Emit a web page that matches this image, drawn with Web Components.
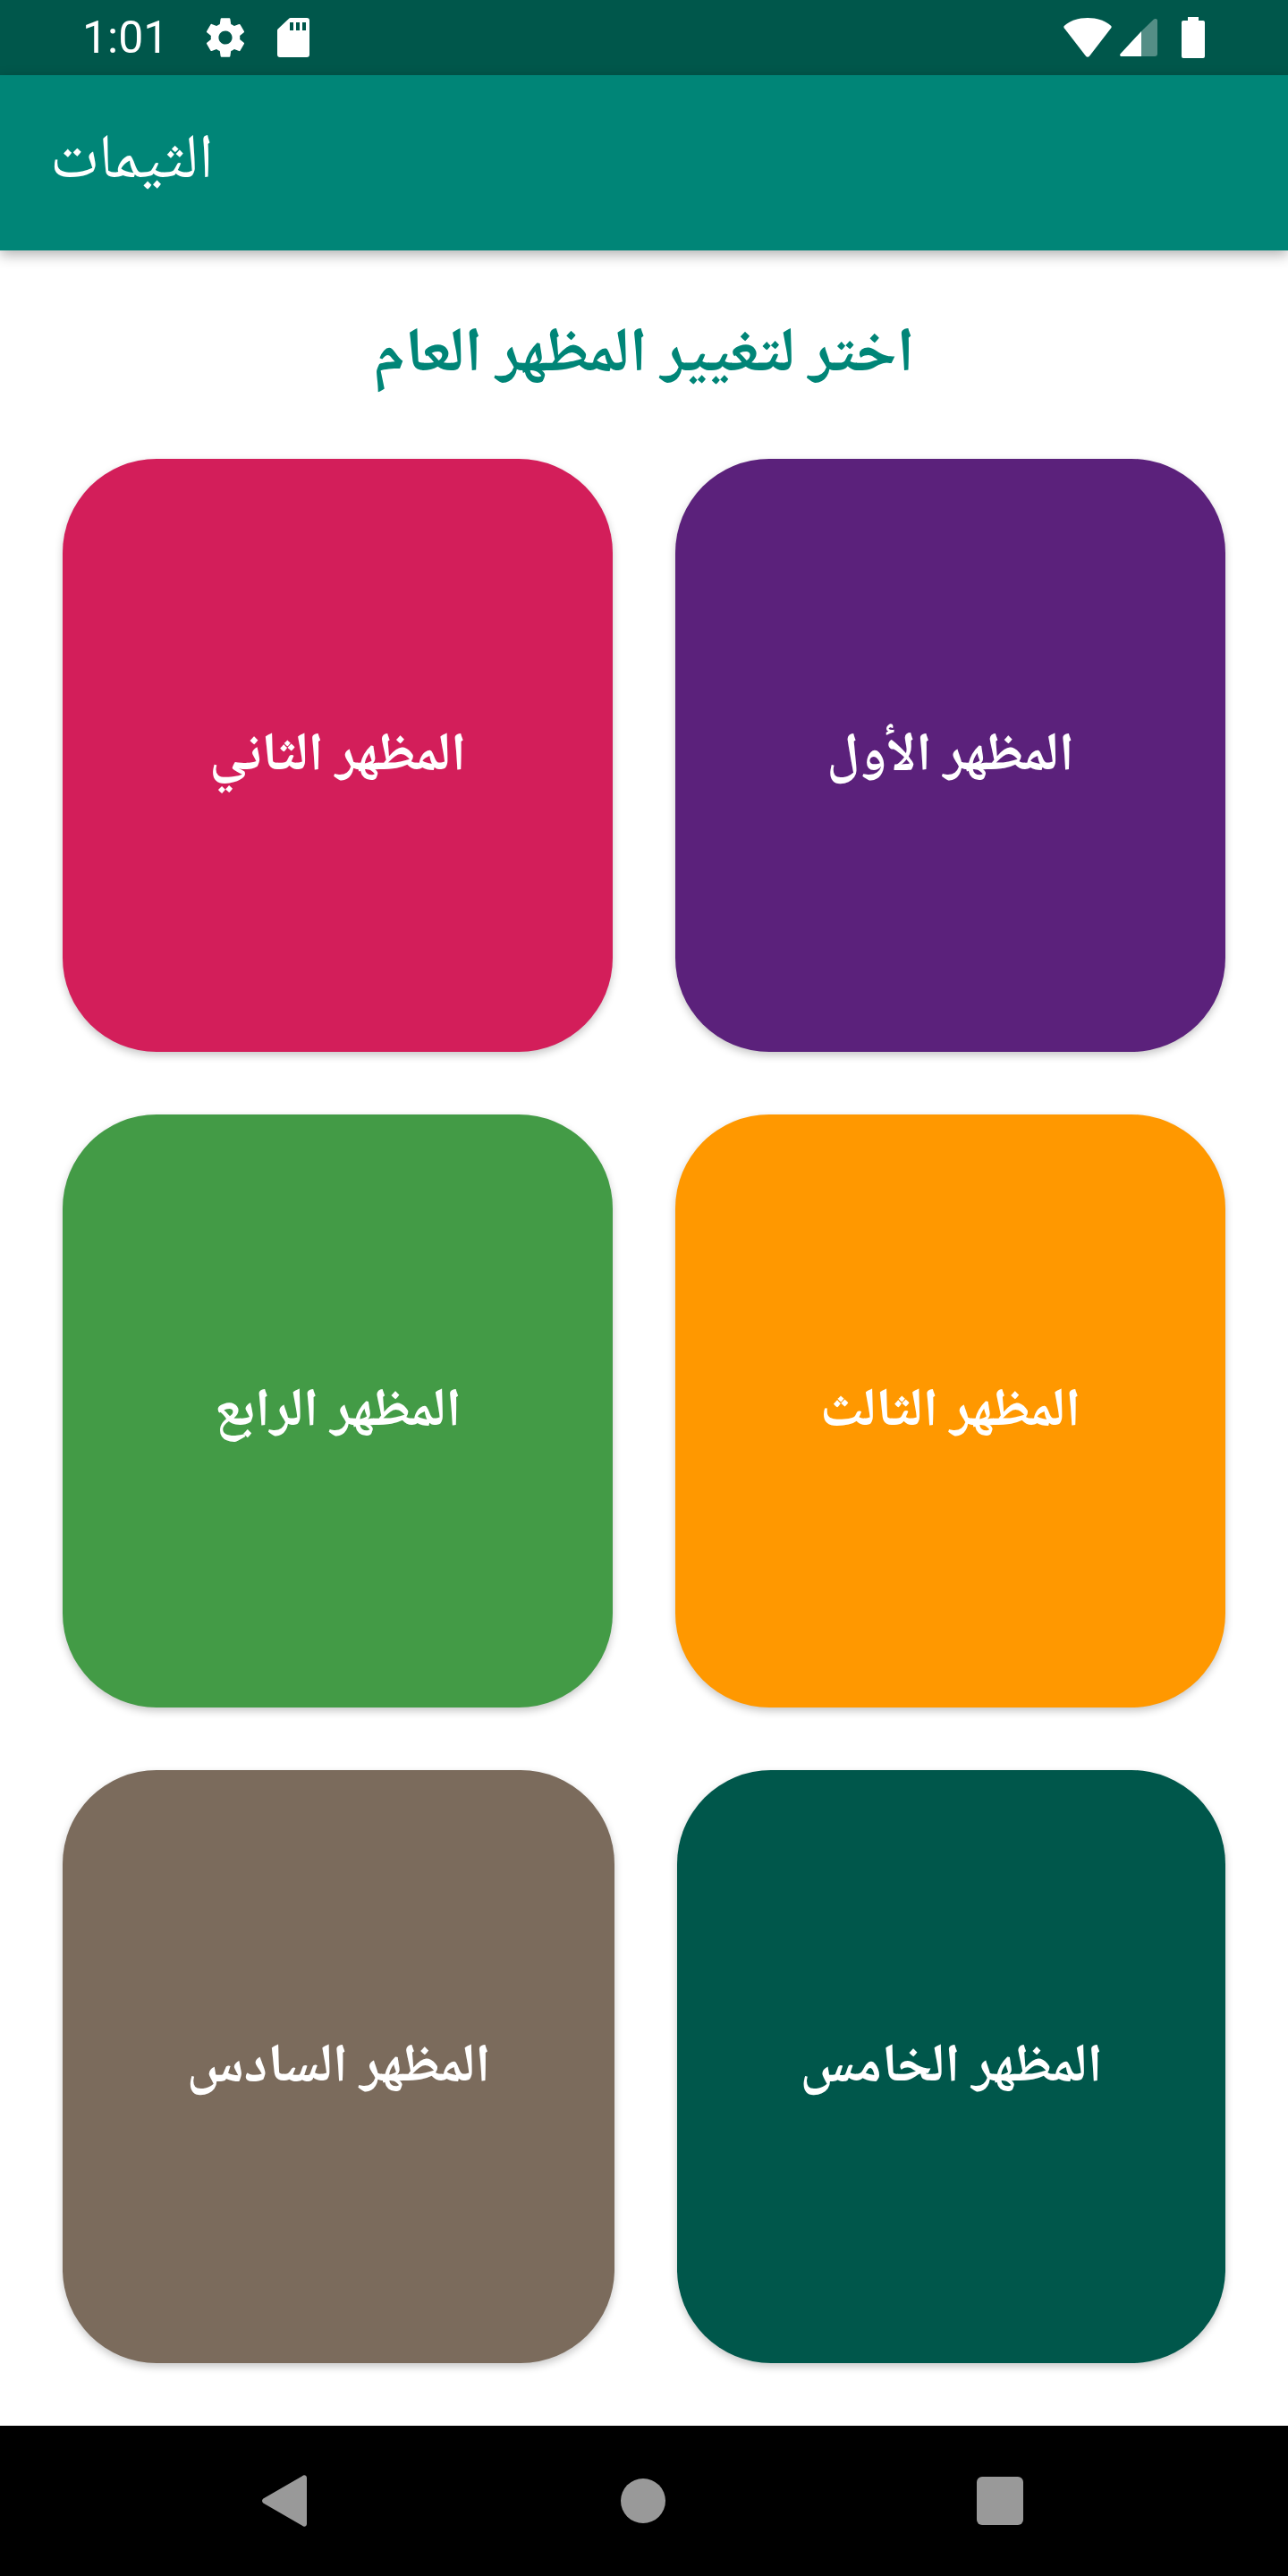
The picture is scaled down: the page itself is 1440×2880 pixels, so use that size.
<!DOCTYPE html>
<html lang="ar">
<head>
<meta charset="utf-8">
<title>الثيمات</title>
<style>
    html, body {
        margin: 0;
        padding: 0;
        background: #fff;
    }
    body {
        width: 1440px;
        height: 2880px;
        display: flex;
        flex-direction: column;
        font-family: "Noto Naskh Arabic", "Noto Sans Arabic", "DejaVu Sans", sans-serif;
    }
</style>
</head>
<body>
<status-bar time="1:01"></status-bar>
<app-bar>الثيمات</app-bar>
<theme-page heading="اختر لتغيير المظهر العام">
    <theme-row>
        <theme-card color="#5b217b">المظهر الأول</theme-card>
        <theme-card color="#d31e5a">المظهر الثاني</theme-card>
    </theme-row>
    <theme-row>
        <theme-card color="#ff9800">المظهر الثالث</theme-card>
        <theme-card color="#439b46">المظهر الرابع</theme-card>
    </theme-row>
    <theme-row columns="613px 617px">
        <theme-card color="#00574b">المظهر الخامس</theme-card>
        <theme-card color="#7b6b5c">المظهر السادس</theme-card>
    </theme-row>
</theme-page>
<nav-bar></nav-bar>

<script>
class StatusBar extends HTMLElement {
    constructor() {
        super();
        this.attachShadow({mode: 'open'});
        this.shadowRoot.innerHTML = `
    <style>
        :host {
            display: flex;
            align-items: center;
            flex: none;
            height: 84px;
            padding: 0 93px 0 92px;
            background-color: #00574b;
            color: #fff;
            font-family: Roboto, sans-serif;
        }
        .time {
            font-size: 50px;
            line-height: 84px;
            width: 134px;
        }
        .spacer {
            flex: 1;
        }
        svg {
            display: block;
            fill: #fff;
            flex: none;
        }
        .gear { margin-right: 32px; }
        .wifi { margin-right: 9px; }
        .signal { margin-right: 27px; }
    </style>
    <span class="time"></span>
    <svg class="gear" width="52" height="52" viewBox="0 0 24 24"><path d="M19.43 12.98c.04-.32.07-.64.07-.98s-.03-.66-.07-.98l2.11-1.65c.19-.15.24-.42.12-.64l-2-3.46c-.12-.22-.39-.3-.61-.22l-2.49 1c-.52-.4-1.08-.73-1.69-.98l-.38-2.65C14.46 2.18 14.25 2 14 2h-4c-.25 0-.46.18-.49.42l-.38 2.65c-.61.25-1.17.59-1.69.98l-2.49-1c-.23-.09-.49 0-.61.22l-2 3.46c-.13.22-.07.49.12.64l2.11 1.65c-.04.32-.07.65-.07.98s.03.66.07.98l-2.11 1.65c-.19.15-.24.42-.12.64l2 3.46c.12.22.39.3.61.22l2.49-1c.52.4 1.08.73 1.69.98l.38 2.65c.03.24.24.42.49.42h4c.25 0 .46-.18.49-.42l.38-2.65c.61-.25 1.17-.59 1.69-.98l2.49 1c.23.09.49 0 .61-.22l2-3.46c.12-.22.07-.49-.12-.64l-2.11-1.65zM12 15.5c-1.93 0-3.5-1.57-3.5-3.5s1.57-3.5 3.5-3.5 3.5 1.57 3.5 3.5-1.57 3.5-3.5 3.5z"/></svg>
    <svg class="sd" width="36" height="44" viewBox="0 0 36 44"><path fill-rule="evenodd" d="M15 0h18a3 3 0 0 1 3 3v38a3 3 0 0 1-3 3H3a3 3 0 0 1-3-3V14a2 2 0 0 1 .6-1.4L12.800.9A3 3 0 0 1 15 0zM14 5v9h4V5zM21 5v9h4V5zM28 5v9h4V5z"/></svg>
    <span class="spacer"></span>
    <svg class="wifi" width="54" height="44" viewBox="0 0 54 44"><path d="M27 0C16.500 0 7.400 3.300 1 8.800c-.8.700-.9 1.700-.3 2.500L25 42.800c1 1.200 3 1.200 4 0l24.300-31.500c.6-.8.500-1.800-.3-2.500C46.600 3.300 37.500 0 27 0z"/></svg>
    <svg class="signal" width="42" height="42" viewBox="0 0 42 42"><path opacity=".33" d="M24 14L38 .6c1.200-1 4-.6 4 1.400v37a3 3 0 0 1-3 3H24z"/><path d="M24 14v28H2c-2 0-2.500-1.800-1.200-3z"/></svg>
    <svg class="battery" width="26" height="46" viewBox="0 0 26 46"><path d="M7 0h12v4h5a2 2 0 0 1 2 2v38a2 2 0 0 1-2 2H2a2 2 0 0 1-2-2V6a2 2 0 0 1 2-2h5z"/></svg>
    `;
    }

    connectedCallback() {
        this.shadowRoot.querySelector('.time').textContent = this.getAttribute('time');
    }
}

class AppBar extends HTMLElement {
    constructor() {
        super();
        this.attachShadow({mode: 'open'});
        this.shadowRoot.innerHTML = `
    <style>
        :host {
            display: flex;
            align-items: center;
            flex: none;
            position: relative;
            height: 196px;
            padding: 0 56px;
            background-color: #008577;
            color: #fff;
            font-size: 70px;
            box-shadow: 0 5px 14px rgba(0, 0, 0, 0.3);
        }
    </style>
    <slot></slot>
    `;
    }
}

class ThemePage extends HTMLElement {
    constructor() {
        super();
        this.attachShadow({mode: 'open'});
        this.shadowRoot.innerHTML = `
    <style>
        :host {
            display: block;
            flex: 1;
            padding: 0 70px;
            background-color: #fff;
        }
        h1 {
            margin: 0;
            height: 233px;
            line-height: 240px;
            text-align: center;
            color: #008577;
            font-size: 70px;
            font-weight: 700;
        }
        .rows {
            display: flex;
            flex-direction: column;
            gap: 70px;
        }
    </style>
    <h1 dir="rtl"></h1>
    <div class="rows"><slot></slot></div>
    `;
    }

    connectedCallback() {
        this.shadowRoot.querySelector('h1').textContent = this.getAttribute('heading');
    }
}

class ThemeRow extends HTMLElement {
    constructor() {
        super();
        this.attachShadow({mode: 'open'});
        this.shadowRoot.innerHTML = `
    <style>
        :host {
            display: grid;
            grid-template-columns: 615px 615px;
            height: 663px;
            column-gap: 70px;
            direction: rtl;
        }
    </style>
    <slot></slot>
    `;
    }

    connectedCallback() {
        if (this.hasAttribute('columns')) {
            this.style.gridTemplateColumns = this.getAttribute('columns');
        }
    }
}

class ThemeCard extends HTMLElement {
    constructor() {
        super();
        this.attachShadow({mode: 'open'});
        this.shadowRoot.innerHTML = `
    <style>
        :host {
            display: flex;
            align-items: center;
            justify-content: center;
            padding-top: 5px;
            box-sizing: border-box;
            border-radius: 105px;
            color: #fff;
            font-size: 60.5px;
            font-weight: 700;
            box-shadow: 0 4px 10px rgba(0, 0, 0, 0.22);
        }
    </style>
    <slot></slot>
    `;
    }

    connectedCallback() {
        this.style.backgroundColor = this.getAttribute('color');
    }
}

class NavBar extends HTMLElement {
    constructor() {
        super();
        this.attachShadow({mode: 'open'});
        this.shadowRoot.innerHTML = `
    <style>
        :host {
            display: flex;
            align-items: center;
            justify-content: space-between;
            flex: none;
            height: 168px;
            padding: 0 296px 0 293px;
            background-color: #000;
        }
        svg {
            display: block;
            fill: #999;
        }
        .home {
            margin-left: 3px;
        }
    </style>
    <svg width="50" height="58" viewBox="0 0 50 58"><path d="M45 1.200c1.900-2.100 5-.7 5 2v51.600c0 2.700-3.100 4.100-5 2L1.300 31.500c-1.700-1.300-1.700-3.700 0-5z"/></svg>
    <svg class="home" width="50" height="50" viewBox="0 0 50 50"><circle cx="25" cy="25" r="25"/></svg>
    <svg width="52" height="54" viewBox="0 0 52 54"><rect width="52" height="54" rx="6"/></svg>
    `;
    }
}

customElements.define('status-bar', StatusBar);
customElements.define('app-bar', AppBar);
customElements.define('theme-page', ThemePage);
customElements.define('theme-row', ThemeRow);
customElements.define('theme-card', ThemeCard);
customElements.define('nav-bar', NavBar);
</script>
</body>
</html>
